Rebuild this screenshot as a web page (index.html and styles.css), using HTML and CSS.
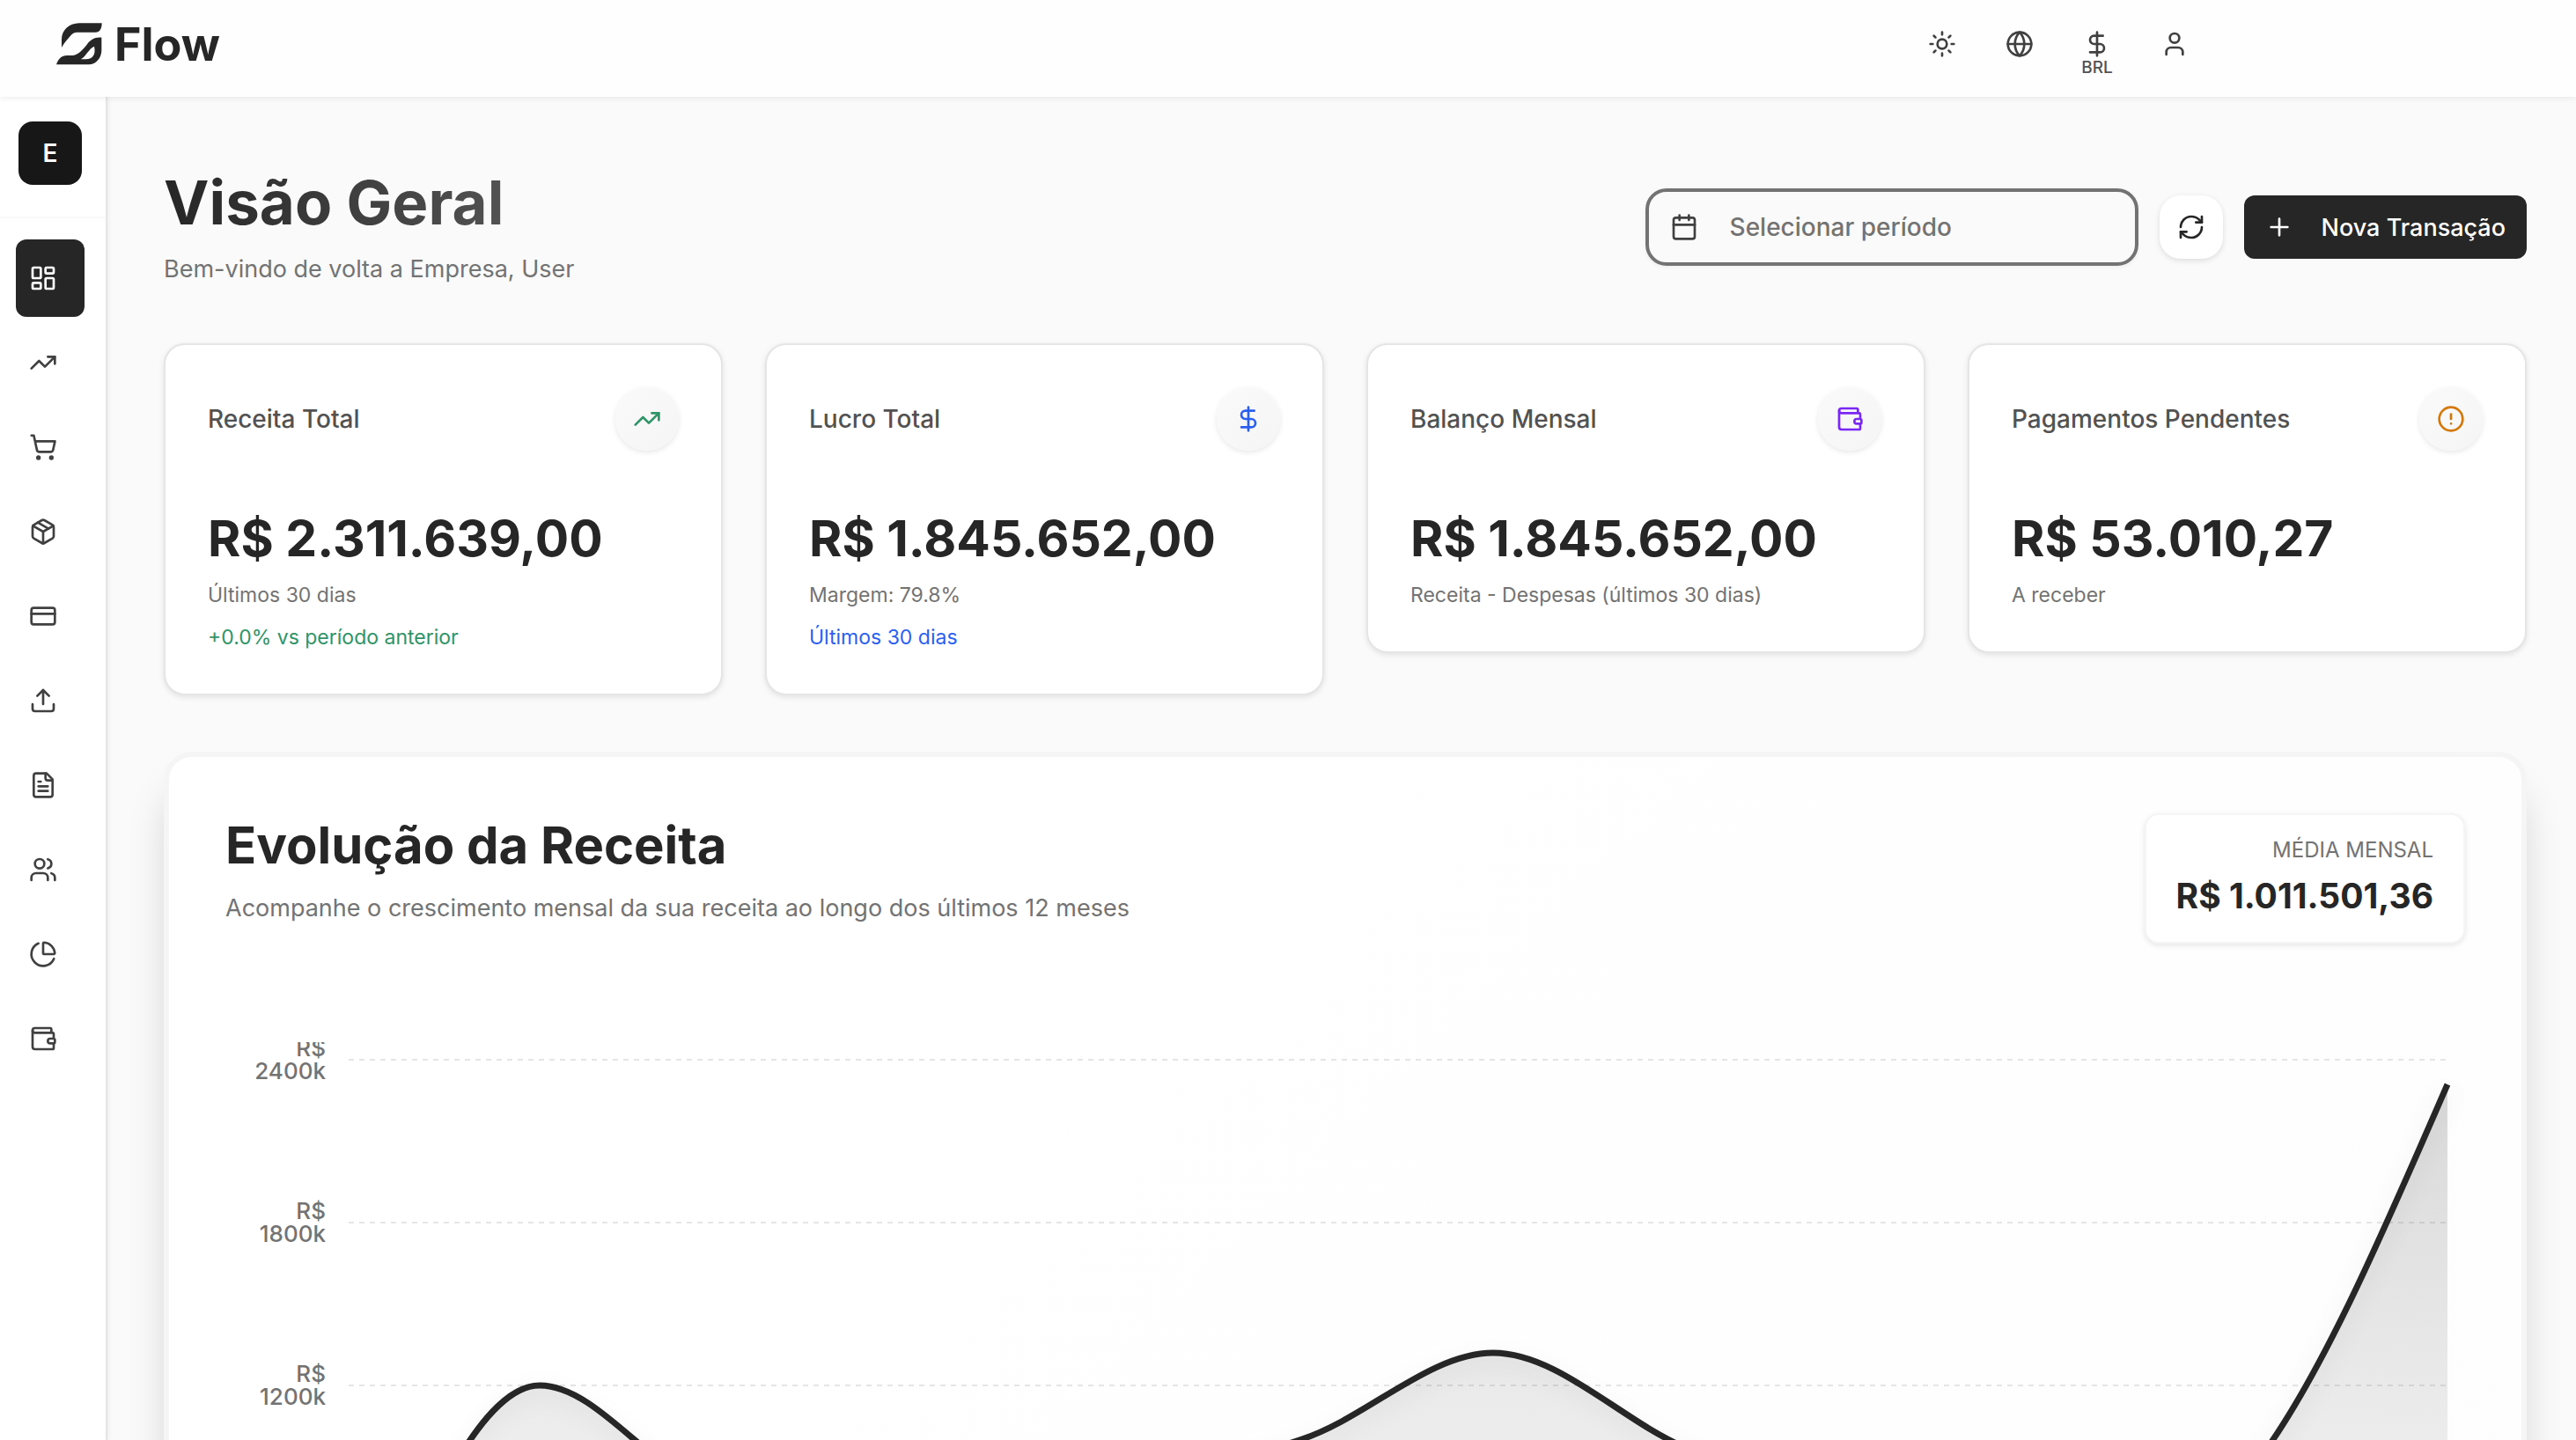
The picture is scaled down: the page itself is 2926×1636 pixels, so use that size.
FILE: index.html
```html
<!DOCTYPE html>
<html lang="pt-BR">
<head>
  <meta charset="UTF-8">
  <meta name="viewport" content="width=device-width, initial-scale=1.0">
  <title>Flow</title>
  <link rel="stylesheet" href="styles.css">
</head>
<body>

  <!-- Header -->
  <header class="header">
    <a href="#" class="logo">
      <svg class="logo-mark" viewBox="42 47 156 142" aria-hidden="true">
        <path d="M197 47H120C84 47 60 72 60 102V130C70 112 86 96 94 86Q100 78 111 78H176C189 78 197 68 197 47Z"/>
        <path fill-rule="evenodd" d="M196 96C172 94 158 104 146 120C126 146 110 157 92 157H78C60 157 48 168 42 188H152C178 188 196 165 196 140ZM171 126C177 150 168 170 142 170H125C143 161 153 133 171 126Z"/>
      </svg>
      <span>Flow</span>
    </a>
    <div class="header-actions">
      <button class="icon-btn" aria-label="Tema">
        <svg class="icon" viewBox="0 0 24 24"><circle cx="12" cy="12" r="4"/><path d="M12 2v2M12 20v2M4.93 4.93l1.41 1.41M17.66 17.66l1.41 1.41M2 12h2M20 12h2M6.34 17.66l-1.41 1.41M19.07 4.93l-1.41 1.41"/></svg>
      </button>
      <button class="icon-btn" aria-label="Idioma">
        <svg class="icon" viewBox="0 0 24 24"><circle cx="12" cy="12" r="10"/><path d="M12 2a14.5 14.5 0 0 0 0 20 14.5 14.5 0 0 0 0-20M2 12h20"/></svg>
      </button>
      <button class="icon-btn">
        <svg class="icon" viewBox="0 0 24 24"><path d="M12 2v20M17 5H9.5a3.5 3.5 0 0 0 0 7h5a3.5 3.5 0 0 1 0 7H6"/></svg>
        <span class="currency">BRL</span>
      </button>
      <button class="icon-btn" aria-label="Conta">
        <svg class="icon" viewBox="0 0 24 24"><path d="M19 21v-2a4 4 0 0 0-4-4H9a4 4 0 0 0-4 4v2"/><circle cx="12" cy="7" r="4"/></svg>
      </button>
    </div>
  </header>

  <div class="layout">
    <!-- Sidebar -->
    <aside class="sidebar">
      <div class="company">
        <button class="company-btn">E</button>
      </div>
      <nav class="nav">
        <a href="#" class="nav-link active" aria-label="Visão geral">
          <svg class="icon" viewBox="0 0 24 24"><rect x="3" y="3" width="7" height="9" rx="1"/><rect x="14" y="3" width="7" height="5" rx="1"/><rect x="14" y="12" width="7" height="9" rx="1"/><rect x="3" y="16" width="7" height="5" rx="1"/></svg>
        </a>
        <a href="#" class="nav-link" aria-label="Receitas">
          <svg class="icon" viewBox="0 0 24 24"><path d="M22 7l-8.5 8.5-5-5L2 17"/><path d="M16 7h6v6"/></svg>
        </a>
        <a href="#" class="nav-link" aria-label="Vendas">
          <svg class="icon" viewBox="0 0 24 24"><circle cx="8" cy="21" r="1"/><circle cx="19" cy="21" r="1"/><path d="M2.05 2.05h2l2.66 12.42a2 2 0 0 0 2 1.58h9.78a2 2 0 0 0 1.95-1.57l1.65-7.43H5.12"/></svg>
        </a>
        <a href="#" class="nav-link" aria-label="Produtos">
          <svg class="icon" viewBox="0 0 24 24"><path d="M11 21.73a2 2 0 0 0 2 0l7-4A2 2 0 0 0 21 16V8a2 2 0 0 0-1-1.73l-7-4a2 2 0 0 0-2 0l-7 4A2 2 0 0 0 3 8v8a2 2 0 0 0 1 1.73z"/><path d="M12 22V12"/><path d="M3.29 7L12 12l8.71-5"/><path d="M7.5 4.27l9 5.15"/></svg>
        </a>
        <a href="#" class="nav-link" aria-label="Pagamentos">
          <svg class="icon" viewBox="0 0 24 24"><rect x="2" y="5" width="20" height="14" rx="2"/><path d="M2 10h20"/></svg>
        </a>
        <a href="#" class="nav-link" aria-label="Importar">
          <svg class="icon" viewBox="0 0 24 24"><path d="M21 15v4a2 2 0 0 1-2 2H5a2 2 0 0 1-2-2v-4"/><path d="M17 8l-5-5-5 5"/><path d="M12 3v12"/></svg>
        </a>
        <a href="#" class="nav-link" aria-label="Documentos">
          <svg class="icon" viewBox="0 0 24 24"><path d="M15 2H6a2 2 0 0 0-2 2v16a2 2 0 0 0 2 2h12a2 2 0 0 0 2-2V7z"/><path d="M14 2v4a2 2 0 0 0 2 2h4"/><path d="M10 9H8M16 13H8M16 17H8"/></svg>
        </a>
        <a href="#" class="nav-link" aria-label="Clientes">
          <svg class="icon" viewBox="0 0 24 24"><path d="M16 21v-2a4 4 0 0 0-4-4H6a4 4 0 0 0-4 4v2"/><circle cx="9" cy="7" r="4"/><path d="M22 21v-2a4 4 0 0 0-3-3.87"/><path d="M16 3.13a4 4 0 0 1 0 7.75"/></svg>
        </a>
        <a href="#" class="nav-link" aria-label="Relatórios">
          <svg class="icon" viewBox="0 0 24 24"><path d="M21 12c.55 0 1-.45.95-1A10 10 0 0 0 13 2.05c-.55-.05-1 .4-1 .95v8a1 1 0 0 0 1 1z"/><path d="M21.21 15.89A10 10 0 1 1 8 2.83"/></svg>
        </a>
        <a href="#" class="nav-link" aria-label="Carteira">
          <svg class="icon" viewBox="0 0 24 24"><path d="M19 7V4a1 1 0 0 0-1-1H5a2 2 0 0 0 0 4h15a1 1 0 0 1 1 1v4h-3a2 2 0 0 0 0 4h3a1 1 0 0 0 1-1v-2a1 1 0 0 0-1-1"/><path d="M3 5v14a2 2 0 0 0 2 2h15a1 1 0 0 0 1-1v-4"/></svg>
        </a>
      </nav>
    </aside>

    <!-- Main content -->
    <main class="main">
      <div class="page-header">
        <div>
          <h1 class="page-title">Visão Geral</h1>
          <p class="page-subtitle">Bem-vindo de volta a Empresa, User</p>
        </div>
        <div class="page-actions">
          <button class="date-btn">
            <svg class="icon" viewBox="0 0 24 24"><path d="M8 2v4M16 2v4"/><rect x="3" y="4" width="18" height="18" rx="2"/><path d="M3 10h18"/></svg>
            <span>Selecionar período</span>
          </button>
          <button class="refresh-btn" aria-label="Atualizar">
            <svg class="icon" viewBox="0 0 24 24"><path d="M3 12a9 9 0 0 1 9-9 9.75 9.75 0 0 1 6.74 2.74L21 8"/><path d="M21 3v5h-5"/><path d="M21 12a9 9 0 0 1-9 9 9.75 9.75 0 0 1-6.74-2.74L3 16"/><path d="M8 16H3v5"/></svg>
          </button>
          <button class="new-btn">
            <svg class="icon" viewBox="0 0 24 24"><path d="M5 12h14M12 5v14"/></svg>
            <span>Nova Transação</span>
          </button>
        </div>
      </div>

      <!-- Stat cards -->
      <div class="cards">
        <section class="card">
          <div class="card-header">
            <h2 class="card-title">Receita Total</h2>
            <span class="card-icon green"><svg class="icon" viewBox="0 0 24 24"><path d="M22 7l-8.5 8.5-5-5L2 17"/><path d="M16 7h6v6"/></svg></span>
          </div>
          <p class="card-value">R$ 2.311.639,00</p>
          <p class="card-note">Últimos 30 dias</p>
          <p class="card-note green">+0.0% vs período anterior</p>
        </section>
        <section class="card">
          <div class="card-header">
            <h2 class="card-title">Lucro Total</h2>
            <span class="card-icon blue"><svg class="icon" viewBox="0 0 24 24"><path d="M12 2v20M17 5H9.5a3.5 3.5 0 0 0 0 7h5a3.5 3.5 0 0 1 0 7H6"/></svg></span>
          </div>
          <p class="card-value">R$ 1.845.652,00</p>
          <p class="card-note">Margem: 79.8%</p>
          <p class="card-note blue">Últimos 30 dias</p>
        </section>
        <section class="card">
          <div class="card-header">
            <h2 class="card-title">Balanço Mensal</h2>
            <span class="card-icon purple"><svg class="icon" viewBox="0 0 24 24"><path d="M19 7V4a1 1 0 0 0-1-1H5a2 2 0 0 0 0 4h15a1 1 0 0 1 1 1v4h-3a2 2 0 0 0 0 4h3a1 1 0 0 0 1-1v-2a1 1 0 0 0-1-1"/><path d="M3 5v14a2 2 0 0 0 2 2h15a1 1 0 0 0 1-1v-4"/></svg></span>
          </div>
          <p class="card-value">R$ 1.845.652,00</p>
          <p class="card-note">Receita - Despesas (últimos 30 dias)</p>
        </section>
        <section class="card">
          <div class="card-header">
            <h2 class="card-title">Pagamentos Pendentes</h2>
            <span class="card-icon orange"><svg class="icon" viewBox="0 0 24 24"><circle cx="12" cy="12" r="10"/><path d="M12 8v4M12 16h.01"/></svg></span>
          </div>
          <p class="card-value">R$ 53.010,27</p>
          <p class="card-note">A receber</p>
        </section>
      </div>

      <!-- Revenue chart -->
      <section class="revenue">
        <div class="revenue-header">
          <div>
            <h2 class="revenue-title">Evolução da Receita</h2>
            <p class="page-subtitle">Acompanhe o crescimento mensal da sua receita ao longo dos últimos 12 meses</p>
          </div>
          <div class="average">
            <p class="average-label">MÉDIA MENSAL</p>
            <p class="average-value">R$ 1.011.501,36</p>
          </div>
        </div>
        <div class="chart">
          <div class="y-axis">
            <span>R$<br>2400k</span>
            <span>R$<br>1800k</span>
            <span>R$<br>1200k</span>
          </div>
          <svg class="plot" viewBox="0 0 2384 740" preserveAspectRatio="none" role="img" aria-label="Receita mensal">
            <defs>
              <linearGradient id="area-fill" x1="0" y1="0" x2="0" y2="1">
                <stop offset="0" stop-color="#262626" stop-opacity="0.17"/>
                <stop offset="0.5" stop-color="#262626" stop-opacity="0.09"/>
                <stop offset="1" stop-color="#262626" stop-opacity="0.03"/>
              </linearGradient>
            </defs>
            <path class="grid-line" d="M0 0H2384M0 185H2384M0 370H2384M0 555H2384M0 740H2384"/>
            <path fill="url(#area-fill)" d="M0 727C72 549 144 370 217 370C289 370 361 494 433 494C505 494 578 560 650 560C722 560 795 524 867 500C939 476 1011 455 1083 431C1156 407 1228 333 1300 333C1373 333 1445 409 1517 440C1589 471 1661 520 1734 520C1806 520 1878 600 1950 600C2022 600 2095 552 2167 458C2239 364 2312 194 2384 28V740H0Z"/>
            <path class="line" d="M0 727C72 549 144 370 217 370C289 370 361 494 433 494C505 494 578 560 650 560C722 560 795 524 867 500C939 476 1011 455 1083 431C1156 407 1228 333 1300 333C1373 333 1445 409 1517 440C1589 471 1661 520 1734 520C1806 520 1878 600 1950 600C2022 600 2095 552 2167 458C2239 364 2312 194 2384 28"/>
          </svg>
        </div>
      </section>
    </main>
  </div>

</body>
</html>
```
FILE: styles.css
```css
/* Basic Reset */
* {
  margin: 0;
  padding: 0;
  box-sizing: border-box;
}

body {
  display: flex;
  flex-direction: column;
  height: 100vh;
  overflow: hidden;
  font-family: Inter, "Liberation Sans", sans-serif;
  font-size: 28px;
  background-color: #fafafa;
  color: #262626;
}

button {
  border: none;
  background: none;
  font: inherit;
  color: inherit;
  cursor: pointer;
}

a {
  color: inherit;
  text-decoration: none;
}

.icon {
  flex-shrink: 0;
  width: 32px;
  height: 32px;
  fill: none;
  stroke: currentColor;
  stroke-width: 2;
  stroke-linecap: round;
  stroke-linejoin: round;
}

/* Header */
.header {
  position: relative;
  z-index: 1;
  display: flex;
  flex-shrink: 0;
  justify-content: space-between;
  padding: 14px 420px 24px 64px;
  background-color: #fefefe;
  box-shadow: 0 2px 6px rgba(0, 0, 0, 0.07);
}

.logo {
  display: flex;
  align-items: center;
  gap: 14px;
  height: 72px;
  font-size: 52px;
  font-weight: 700;
}

.logo-mark {
  width: 52px;
  height: 48px;
  fill: #262626;
}

.header-actions {
  display: flex;
  gap: 16px;
  color: #404040;
}

.icon-btn {
  position: relative;
  display: flex;
  align-items: center;
  justify-content: center;
  width: 72px;
  height: 72px;
}

.currency {
  position: absolute;
  bottom: 0;
  font-size: 19px;
  font-weight: 500;
  line-height: 18px;
  color: #525252;
}

.layout {
  display: flex;
  flex: 1;
  min-height: 0;
}

/* Sidebar */
.sidebar {
  flex-shrink: 0;
  width: 122px;
  background-color: #fff;
  border-right: 2px solid #e5e5e5;
  box-shadow: 2px 0 4px rgba(0, 0, 0, 0.05);
}

.company {
  padding: 28px 21px 36px;
  border-bottom: 2px solid #fafafa;
}

.company-btn {
  width: 72px;
  height: 72px;
  border-radius: 16px;
  background-color: #171717;
  color: #fff;
  font-weight: 600;
}

.nav {
  display: flex;
  flex-direction: column;
  gap: 8px;
  padding: 24px 24px 24px 18px;
}

.nav-link {
  display: flex;
  align-items: center;
  height: 88px;
  padding: 0 15px;
  border-radius: 12px;
  color: #404040;
}

.nav-link.active {
  background-color: #262626;
  color: #fff;
}

/* Main */
.main {
  flex: 1;
  min-width: 0;
  padding: 80px 56px 64px 64px;
  overflow-y: auto;
  scrollbar-width: none;
}

.page-header {
  display: flex;
  align-items: center;
  justify-content: space-between;
  margin-bottom: 64px;
}

.page-title {
  width: fit-content;
  font-size: 69px;
  font-weight: 700;
  line-height: 80px;
  background: linear-gradient(90deg, #262626, #525252);
  background-clip: text;
  -webkit-background-clip: text;
  color: transparent;
}

.page-subtitle {
  margin-top: 16px;
  font-size: 27px;
  line-height: 40px;
  color: #737373;
}

.page-actions {
  display: flex;
  align-items: center;
  gap: 24px;
  font-weight: 500;
}

.date-btn {
  display: flex;
  align-items: center;
  gap: 36px;
  width: 560px;
  height: 88px;
  padding: 0 24px;
  border: 4px solid #737373;
  border-radius: 24px;
  box-shadow: 0 2px 4px rgba(0, 0, 0, 0.05);
  color: #737373;
}

.date-btn .icon {
  color: #404040;
}

.refresh-btn {
  display: flex;
  align-items: center;
  justify-content: center;
  width: 72px;
  height: 72px;
  border-radius: 24px;
  background-color: #fff;
  box-shadow: 0 2px 6px rgba(0, 0, 0, 0.12);
}

.new-btn {
  display: flex;
  align-items: center;
  gap: 32px;
  height: 72px;
  padding: 0 24px;
  border-radius: 12px;
  background-color: #262626;
  font-size: 27px;
  color: #fff;
}

/* Cards */
.cards {
  display: grid;
  grid-template-columns: repeat(4, 1fr);
  align-items: start;
  gap: 48px;
}

.card {
  padding: 48px 48px 44px;
  border: 2px solid #e5e5e5;
  border-radius: 24px;
  background-color: #fff;
  box-shadow: 0 2px 6px rgba(0, 0, 0, 0.1);
}

.card-header {
  display: flex;
  align-items: center;
  justify-content: space-between;
  margin-bottom: 64px;
}

.card-title {
  font-size: 28px;
  font-weight: 500;
  color: #525252;
}

.card-icon {
  display: flex;
  align-items: center;
  justify-content: center;
  width: 72px;
  height: 72px;
  border-radius: 50%;
  background: linear-gradient(135deg, #fafafa, #f5f5f5);
  box-shadow: 0 2px 6px rgba(0, 0, 0, 0.1);
}

.card-value {
  font-size: 57px;
  font-weight: 700;
  line-height: 72px;
}

.card-note {
  margin-top: 8px;
  font-size: 23px;
  line-height: 40px;
  color: #737373;
}

.green {
  color: #2f9467;
}

.blue {
  color: #2b5ff0;
}

.purple {
  color: #7a26f5;
}

.orange {
  color: #d4780a;
}

/* Revenue chart */
.revenue {
  margin-top: 64px;
  padding: 64px;
  border: 6px solid #f5f5f5;
  border-radius: 32px;
  background: linear-gradient(135deg, #fff 30%, #fdfdfd);
  background-clip: padding-box;
  box-shadow: 0 40px 50px -10px rgba(0, 0, 0, 0.2);
}

.revenue-header {
  display: flex;
  align-items: flex-start;
  justify-content: space-between;
  margin-bottom: 112px;
}

.revenue-title {
  font-size: 58px;
  font-weight: 700;
  line-height: 72px;
}

.average {
  padding: 24px 34px;
  border: 2px solid #f5f5f5;
  border-radius: 16px;
  background-color: #fff;
  box-shadow: 0 2px 6px rgba(0, 0, 0, 0.1);
  text-align: right;
}

.average-label {
  font-size: 24px;
  line-height: 32px;
  color: #737373;
}

.average-value {
  margin-top: 8px;
  font-size: 39px;
  font-weight: 700;
  line-height: 56px;
}

.chart {
  display: flex;
  gap: 26px;
  padding: 20px 20px 40px 0;
  overflow: hidden;
}

.y-axis {
  display: flex;
  flex-direction: column;
  gap: 133px;
  width: 114px;
  margin-top: -26px;
  font-size: 26px;
  font-weight: 500;
  line-height: 26px;
  text-align: right;
  color: #737373;
}

.plot {
  flex: 1;
  min-width: 0;
  height: 740px;
  overflow: visible;
}

.grid-line {
  stroke: #e5e5e5;
  stroke-width: 2;
  stroke-dasharray: 6 6;
  vector-effect: non-scaling-stroke;
}

.line {
  fill: none;
  stroke: #262626;
  stroke-width: 7;
  vector-effect: non-scaling-stroke;
  filter: drop-shadow(0 8px 12px rgba(0, 0, 0, 0.08));
}
```
